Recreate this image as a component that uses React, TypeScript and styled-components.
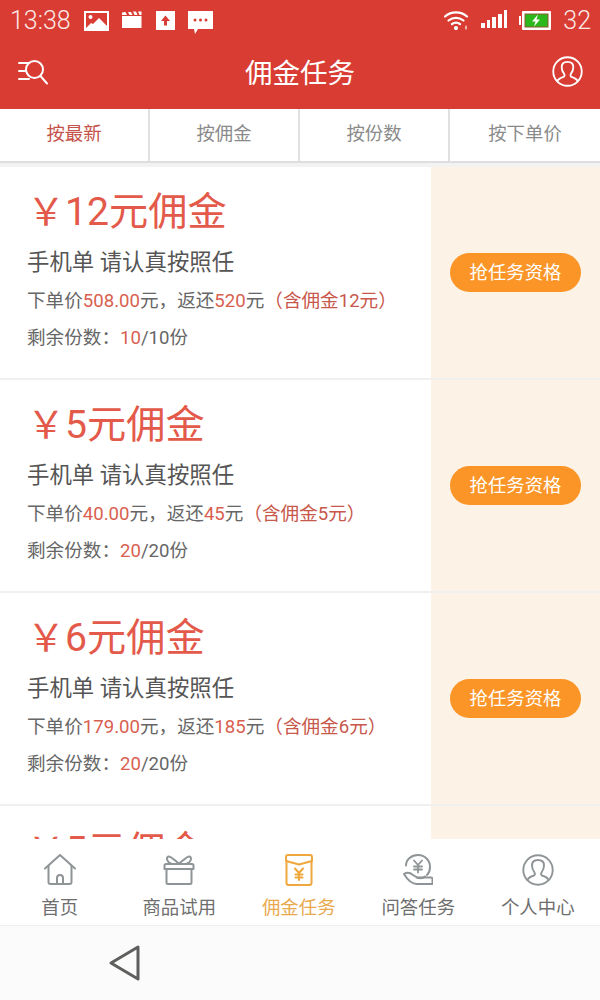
import styled, { createGlobalStyle } from 'styled-components'

const GlobalStyle = createGlobalStyle`
  html, body {
    margin: 0;
    padding: 0;
    background: #f2f2f2;
    font-family: Roboto, "Noto Sans CJK SC", sans-serif;
  }
`

const tasks = [
  { amount: 12, price: '508.00', back: 520, left: 10, total: 10 },
  { amount: 5, price: '40.00', back: 45, left: 20, total: 20 },
  { amount: 6, price: '179.00', back: 185, left: 20, total: 20 },
  { amount: 5, price: '40.00', back: 45, left: 20, total: 20, peek: true },
]

const sorts = ['按最新', '按佣金', '按份数', '按下单价']

const HomeIcon = () => (
  <svg width="32" height="32" viewBox="0 0 32 32" fill="none" stroke="#8f9496" strokeWidth="2" strokeLinejoin="round" strokeLinecap="round">
    <path d="M1 14.500 16 1l15 13.500" />
    <path d="M4.500 12v16a2 2 0 0 0 2 2h19a2 2 0 0 0 2-2V12" />
    <path d="M13 30v-6a3 3 0 0 1 6 0v6" />
  </svg>
)

const GiftIcon = () => (
  <svg width="32" height="32" viewBox="0 0 32 32" fill="none" stroke="#8f9496" strokeWidth="2" strokeLinejoin="round" strokeLinecap="round">
    <path d="M1.500 11.500a1.500 1.500 0 0 1 1.500-1.500h26a1.500 1.500 0 0 1 1.500 1.500V15h-29z" />
    <path d="M3.500 15v13.500a1.500 1.500 0 0 0 1.500 1.500h22a1.500 1.500 0 0 0 1.500-1.500V15" />
    <path d="M16 9.500C12 7 8 2 5.500 2.500 3 3 3.500 8 8 9.500" />
    <path d="M16 9.500C20 7 24 2 26.500 2.500 29 3 28.500 8 24 9.500" />
  </svg>
)

const EnvelopeIcon = () => (
  <svg width="28" height="32" viewBox="0 0 28 32" fill="none" stroke="#efa83e" strokeWidth="2" strokeLinejoin="round" strokeLinecap="round">
    <path d="M1 3a2 2 0 0 1 2-2h22a2 2 0 0 1 2 2v4l-13 3.500L1 7z" />
    <path d="M1.500 7v22a2 2 0 0 0 2 2h21a2 2 0 0 0 2-2V7" />
    <path d="M10 14.500 14 19l4-4.500M14 19v7M10.500 20.500h7M10.500 23.500h7" strokeWidth="2.100" />
  </svg>
)

const CoinHandIcon = () => (
  <svg width="30" height="32" viewBox="0 0 30 32" fill="none" stroke="#8f9496" strokeWidth="2" strokeLinejoin="round" strokeLinecap="round">
    <path d="M3 11.500C3 5.500 8.500 1 15 1c7 0 12 5.500 12 12 0 3.500-1 6-3 8" />
    <path d="M11 6.500 15 11l4-4.500M15 11v7.500M11 12.500h8M11 15.500h8" strokeWidth="1.800" />
    <path d="M1 20c3-2 6-1.500 9 1l4 2.500h14c1 0 1.500 1 1.500 2v4.500H14C8 30 4 25 1 20z" />
    <path d="M14 23.500c3 1 6 1 8-1" />
  </svg>
)

const UserCircleIcon = ({ color, size }: { color: string; size: number }) => (
  <svg width={size} height={size} viewBox="0 0 32 32" fill="none" stroke={color} strokeWidth="1.900" strokeLinejoin="round" strokeLinecap="round">
    <circle cx="16" cy="16" r="14.700" />
    <path d="M5.500 26c1-2.500 3-3.500 6.500-4.500 1-.4 1.200-2 .5-3-1.500-2-2.500-4-2.500-7C10 8 12.500 6 16 6s6 2 6 5.500c0 3-1 5-2.500 7-.7 1-.5 2.600.5 3 3.500 1 5.500 2 6.500 4.500" />
  </svg>
)

const tabItems = [
  { label: '首页', icon: <HomeIcon />, active: false },
  { label: '商品试用', icon: <GiftIcon />, active: false },
  { label: '佣金任务', icon: <EnvelopeIcon />, active: true },
  { label: '问答任务', icon: <CoinHandIcon />, active: false },
  { label: '个人中心', icon: <UserCircleIcon color="#8f9496" size={32} />, active: false },
]

export default function App() {
  return (
    <Page>
      <GlobalStyle />
      <Header>
        <StatusBar>
          <StatusLeft>
            <Clock>13:38</Clock>
            <svg width="25" height="20" viewBox="0 0 25 20">
              <path d="M0 0h25v20H0z" fill="#fff" />
              <path d="M2 2h21v13l-8-8-6 6-2-1-5 5z" fill="#d83c33" />
              <circle cx="6.500" cy="6" r="2" fill="#fff" />
            </svg>
            <svg width="21" height="17" viewBox="0 0 21 17">
              <path d="M0 5h19.500v12H0zM0 1.500 3.500 1 5 4H0zM6 1h3l1.500 3h-3zM11 .5h3L15.500 4h-3zM16 .5h3.500V4h-2z" fill="#fff" />
            </svg>
            <svg width="19" height="19" viewBox="0 0 19 19">
              <path d="M0 0h19v19H0z" fill="#fff" />
              <path d="M9.500 4.500 14 10h-3v4.500H8V10H5z" fill="#d83c33" />
            </svg>
            <svg width="25" height="23" viewBox="0 0 25 23">
              <path d="M0 0h25v18H10l-3 5-1-5H0z" fill="#fff" />
              <circle cx="7" cy="9" r="1.500" fill="#d83c33" />
              <circle cx="12.500" cy="9" r="1.500" fill="#d83c33" />
              <circle cx="18" cy="9" r="1.500" fill="#d83c33" />
            </svg>
          </StatusLeft>
          <StatusRight>
            <svg width="25" height="20" viewBox="0 0 25 20" fill="none" stroke="#fff" strokeWidth="2.200" strokeLinecap="round">
              <path d="M1 6.500C7 1 17 1 23 6.500" />
              <path d="M4.500 10.500c4.500-3.500 10.500-3.500 15 0" />
              <path d="M8 14c2.500-1.800 5.500-1.800 8 0" />
              <circle cx="12" cy="18" r="1" fill="#fff" />
              <path d="M22 16v3" strokeWidth="1.200" />
            </svg>
            <SignalBars>
              {[5.500, 8, 11, 14, 18.500].map((h) => (
                <SignalBar key={h} $height={h} />
              ))}
            </SignalBars>
            <svg width="32" height="19" viewBox="0 0 32 19">
              <path d="M0 5h2v9H0z" fill="#fff" />
              <rect x="3" y="0" width="29" height="19" rx="1" fill="#fff" />
              <rect x="5.500" y="2.500" width="24" height="14" fill="#8a5a2e" />
              <rect x="6.500" y="3.500" width="22" height="12" fill="#2bb81d" />
              <path d="M19 3.500l-6 7h3.500L15 15.500l6-7h-3.500z" fill="#fff" />
            </svg>
            <Battery>32</Battery>
          </StatusRight>
        </StatusBar>
        <TitleBar>
          <svg width="32" height="26" viewBox="0 0 32 26" fill="none" stroke="#fff" strokeWidth="2" strokeLinecap="round">
            <path d="M1 4h10M1 12h7M1 20h10" />
            <circle cx="16.500" cy="10.500" r="8.500" />
            <path d="M22.500 17l6.500 7.500" />
          </svg>
          <Title>佣金任务</Title>
          <UserCircleIcon color="#fff" size={31} />
        </TitleBar>
      </Header>

      <SortBar>
        {sorts.map((s, i) => (
          <SortItem key={s} $active={i === 0}>
            {s}
          </SortItem>
        ))}
      </SortBar>

      <TaskList>
        {tasks.map((t, i) => (
          <TaskRow key={i}>
            <TaskInfo>
              <Amount>
                <Yen>￥</Yen>
                {t.amount}元佣金
              </Amount>
              {!t.peek && (
                <>
                  <TaskName>手机单 请认真按照任</TaskName>
                  <Detail>
                    下单价<Red>{t.price}</Red>元，返还<Red>{t.back}</Red>元<Red $bracket>（含佣金{t.amount}元）</Red>
                  </Detail>
                  <Detail>
                    剩余份数：<Red>{t.left}</Red>/{t.total}份
                  </Detail>
                </>
              )}
            </TaskInfo>
            <TaskAction>{!t.peek && <GrabButton>抢任务资格</GrabButton>}</TaskAction>
          </TaskRow>
        ))}
      </TaskList>

      <TabBar>
        {tabItems.map((t) => (
          <TabItem key={t.label} $active={t.active}>
            <TabIcon>{t.icon}</TabIcon>
            {t.label}
          </TabItem>
        ))}
      </TabBar>

      <NavBar>
        <svg width="32" height="36" viewBox="0 0 32 36" fill="none" stroke="#5d5f5c" strokeWidth="3" strokeLinejoin="round">
          <path d="M29 2v32L2 18z" />
        </svg>
      </NavBar>
    </Page>
  )
}

const Page = styled.div`
  width: 600px;
  height: 1000px;
  display: flex;
  flex-direction: column;
  overflow: hidden;
  background: #f2f2f2;
`

const Header = styled.header`
  height: 109px;
  flex: none;
  background: #d83c33;
  color: #fff;
  display: flex;
  flex-direction: column;
`

const StatusBar = styled.div`
  height: 40px;
  padding: 0 9px 0 10px;
  display: flex;
  align-items: center;
  justify-content: space-between;
`

const StatusLeft = styled.div`
  display: flex;
  align-items: flex-start;
  gap: 13px;
  padding-top: 2px;

  & > svg {
    margin-top: 8px;
  }
`

const StatusRight = styled.div`
  display: flex;
  align-items: center;
  gap: 12px;
`

const Clock = styled.span`
  font-size: 25px;
  line-height: 36px;
  font-weight: 300;
  color: #fbe9e7;
`

const Battery = styled.span`
  font-size: 25px;
  line-height: 32px;
  margin-top: 2px;
  font-weight: 300;
  color: #fbe9e7;
`

const SignalBars = styled.div`
  display: flex;
  align-items: flex-end;
  gap: 2px;
  height: 19px;
  margin-bottom: 3px;
`

const SignalBar = styled.span<{ $height: number }>`
  width: 3.600px;
  height: ${(p) => p.$height}px;
  background: #fff;
`

const TitleBar = styled.div`
  flex: 1;
  padding: 0 17px 6px 18px;
  display: flex;
  align-items: center;
  justify-content: space-between;
`

const Title = styled.h1`
  margin: 0 2px 1px 0;
  font-size: 27.500px;
  font-weight: 400;
`

const SortBar = styled.nav`
  height: 52px;
  flex: none;
  display: grid;
  grid-template-columns: repeat(4, 1fr);
  background: #fff;
  border-bottom: 2px solid #dedede;
`

const SortItem = styled.div<{ $active: boolean }>`
  display: flex;
  align-items: center;
  justify-content: center;
  padding-bottom: 6px;
  font-size: 18.400px;
  color: ${(p) => (p.$active ? '#c4524a' : '#8a8a8a')};
  border-right: 2px solid #e0e0e0;

  &:last-child {
    border-right: 0;
  }
`

const TaskList = styled.main`
  flex: 1;
  min-height: 0;
  overflow: hidden;
  margin-top: 4px;
  display: flex;
  flex-direction: column;
  background: #fff;
`

const TaskRow = styled.article`
  height: 213px;
  flex: none;
  box-sizing: border-box;
  display: flex;
  border-bottom: 2px solid #f0f0f0;
`

const TaskInfo = styled.div`
  width: 431px;
  flex: none;
  box-sizing: border-box;
  padding: 19px 0 0 27px;
  background: #fff;
`

const Amount = styled.div`
  font-size: 39.200px;
  line-height: 52px;
  color: #e35a4a;
  white-space: nowrap;
`

const Yen = styled.span`
  font-size: 38px;
`

const TaskName = styled.div`
  margin-top: 8px;
  font-size: 22.400px;
  line-height: 32px;
  color: #555;
`

const Detail = styled.div`
  margin-top: 9px;
  font-size: 18.600px;
  line-height: 28px;
  color: #666;
  white-space: nowrap;
`

const Red = styled.span<{ $bracket?: boolean }>`
  color: ${(p) => (p.$bracket ? '#c8574c' : '#d9604f')};
`

const TaskAction = styled.div`
  flex: 1;
  display: flex;
  align-items: center;
  justify-content: center;
  background: #fcf2e6;
`

const GrabButton = styled.button`
  width: 131px;
  height: 39px;
  border: 0;
  border-radius: 20px;
  padding: 0 0 4px;
  background: #fb9527;
  color: #fff;
  font-family: inherit;
  font-size: 18.400px;
`

const TabBar = styled.nav`
  height: 87px;
  flex: none;
  box-sizing: border-box;
  display: grid;
  grid-template-columns: repeat(5, 119.500px);
  background: #fff;
  border-bottom: 1px solid #eee;
`

const TabItem = styled.div<{ $active: boolean }>`
  display: flex;
  flex-direction: column;
  align-items: center;
  font-size: 18.400px;
  line-height: 26px;
  color: ${(p) => (p.$active ? '#e9a94f' : '#6e6e6e')};
`

const TabIcon = styled.div`
  height: 32px;
  margin-top: 15px;
  margin-bottom: 9px;
  display: flex;
  justify-content: center;
`

const NavBar = styled.div`
  height: 74px;
  flex: none;
  box-sizing: border-box;
  padding: 19px 0 0 109px;
  background: #fbfbfb;
`
